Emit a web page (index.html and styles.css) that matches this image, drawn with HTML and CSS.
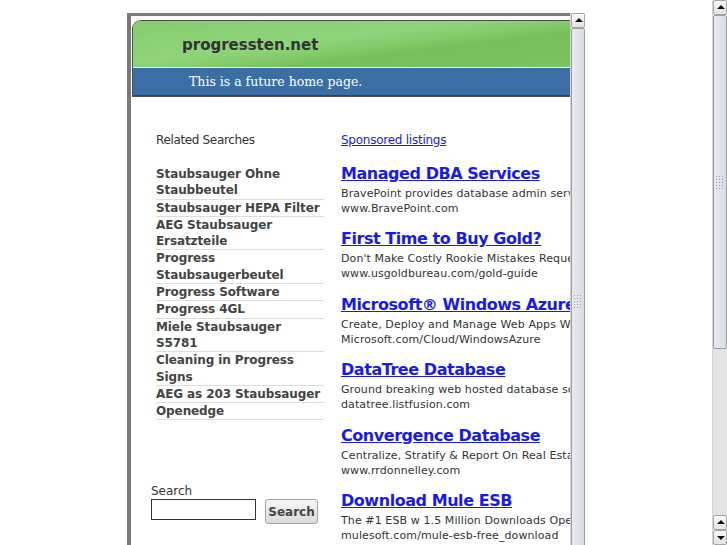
FILE: index.html
```html
<!DOCTYPE html>
<html lang="en">
<head>
    <meta charset="UTF-8">
    <title>progressten.net</title>
    <link rel="stylesheet" href="styles.css">
</head>
<body>
    <div class="viewport">
        <div class="frame">
            <div class="frame-doc">
                <header class="site-header">
                    <div class="site-title">progressten.net</div>
                    <div class="site-tagline">This is a future home page.</div>
                </header>

                <div class="content">
                    <aside class="related">
                        <h2>Related Searches</h2>
                        <ul class="related-list">
                            <li>Staubsauger Ohne Staubbeutel</li>
                            <li>Staubsauger HEPA Filter</li>
                            <li>AEG Staubsauger Ersatzteile</li>
                            <li>Progress Staubsaugerbeutel</li>
                            <li>Progress Software</li>
                            <li>Progress 4GL</li>
                            <li>Miele Staubsauger S5781</li>
                            <li>Cleaning in Progress Signs</li>
                            <li>AEG as 203 Staubsauger</li>
                            <li>Openedge</li>
                        </ul>

                        <form class="search-form">
                            <label for="q">Search</label>
                            <div class="search-row">
                                <input type="text" id="q">
                                <button type="button">Search</button>
                            </div>
                        </form>
                    </aside>

                    <main class="listings">
                        <a class="sponsored" href="#">Sponsored listings</a>

                        <div class="ad">
                            <a class="ad-title" href="#">Managed DBA Services</a>
                            <p>BravePoint provides database admin services for your business</p>
                            <p>www.BravePoint.com</p>
                        </div>
                        <div class="ad">
                            <a class="ad-title" href="#">First Time to Buy Gold?</a>
                            <p>Don't Make Costly Rookie Mistakes Request Free Guide</p>
                            <p>www.usgoldbureau.com/gold-guide</p>
                        </div>
                        <div class="ad">
                            <a class="ad-title" href="#">Microsoft® Windows Azure</a>
                            <p>Create, Deploy and Manage Web Apps With Ease</p>
                            <p>Microsoft.com/Cloud/WindowsAzure</p>
                        </div>
                        <div class="ad">
                            <a class="ad-title" href="#">DataTree Database</a>
                            <p>Ground breaking web hosted database solutions</p>
                            <p>datatree.listfusion.com</p>
                        </div>
                        <div class="ad">
                            <a class="ad-title" href="#">Convergence Database</a>
                            <p>Centralize, Stratify &amp; Report On Real Estate Data</p>
                            <p>www.rrdonnelley.com</p>
                        </div>
                        <div class="ad">
                            <a class="ad-title" href="#">Download Mule ESB</a>
                            <p>The #1 ESB w 1.5 Million Downloads Open Source</p>
                            <p>mulesoft.com/mule-esb-free_download</p>
                        </div>
                    </main>
                </div>
            </div>

            <div class="scrollbar">
                <div class="sb-btn up"></div>
                <div class="sb-thumb long"><span class="grip"></span></div>
            </div>
        </div>
    </div>

    <div class="scrollbar page">
        <div class="sb-btn up"></div>
        <div class="sb-thumb"><span class="grip"></span></div>
        <div class="sb-track"></div>
        <div class="sb-btn up"></div>
        <div class="sb-btn down"></div>
    </div>
</body>
</html>
```

FILE: styles.css
```css
* {
    margin: 0;
    padding: 0;
    box-sizing: border-box;
}

html, body {
    height: 545px;
    overflow: hidden;
}

body {
    display: flex;
    background-color: white;
    color: #333;
    font-family: 'DejaVu Sans', Verdana, sans-serif;
    font-size: 11px;
}

.viewport {
    flex: 1;
    padding-top: 13px;
}

.frame {
    width: 458px;
    height: 560px;
    margin: 0 auto;
    display: flex;
}

.frame-doc {
    flex: 1;
    overflow: hidden;
    border-top: 3px solid #7a7a7a;
    border-left: 4px solid #7a7a7a;
    padding: 4px 0 0 1px;
}

/* header */
.site-header {
    width: 480px;
    border: 1px solid #4f4f4f;
    border-right: none;
    border-radius: 9px 0 0 0;
    overflow: hidden;
}

.site-title {
    height: 47px;
    padding: 15px 0 0 49px;
    background: linear-gradient(173deg, #86cc6e 0%, #8fd47b 40%, #84cb6b 52%, #76bf5a 62%, #7bc360 100%);
    border-bottom: 1px solid #eef5ea;
    color: #333;
    font-weight: bold;
    font-size: 15px;
    line-height: 18px;
}

.site-tagline {
    height: 28px;
    padding: 5px 0 0 56px;
    background-color: #3a6ea5;
    border-bottom: 1px solid #22466e;
    color: white;
    font-family: 'DejaVu Serif', serif;
    font-size: 12.5px;
    line-height: 17px;
}

/* columns */
.content {
    display: flex;
    padding: 35px 0 0 19px;
}

.related {
    width: 190px;
    flex: none;
}

.related h2 {
    font-size: 12px;
    font-weight: normal;
    line-height: 16px;
    letter-spacing: -0.35px;
    margin: 0 0 18px 5px;
}

.related-list {
    list-style: none;
    width: 168px;
    margin-left: 5px;
}

.related-list li {
    color: #444;
    font-size: 12px;
    font-weight: bold;
    line-height: 16.3px;
    letter-spacing: -0.1px;
    border-bottom: 1px solid #dcdcdc;
}

.search-form {
    margin-top: 64px;
}

.search-form label {
    display: block;
    font-size: 12px;
    line-height: 14px;
    margin-bottom: 1px;
}

.search-row {
    display: flex;
    gap: 9px;
    align-items: flex-start;
}

.search-row input {
    width: 105px;
    height: 21px;
    border: 1px solid #333;
}

.search-row button {
    width: 53px;
    height: 25px;
    border: 1px solid #a4a4a4;
    border-radius: 3px;
    background: linear-gradient(#f6f6f6, #dadada);
    color: #444;
    font-family: 'DejaVu Sans', sans-serif;
    font-size: 12px;
    font-weight: bold;
}

.listings {
    flex: none;
    white-space: nowrap;
}

.sponsored {
    display: block;
    color: #1a1ae6;
    font-size: 12px;
    line-height: 16px;
    letter-spacing: -0.25px;
    margin-bottom: 16px;
}

.ad {
    margin-bottom: 13.4px;
}

.ad-title {
    display: block;
    color: #1a1ae6;
    font-size: 16px;
    font-weight: bold;
    line-height: 20px;
    letter-spacing: -0.45px;
    margin-bottom: 2px;
}

.ad p {
    line-height: 15px;
    letter-spacing: 0.1px;
    color: #333;
}

/* scrollbars */
.scrollbar {
    width: 15px;
    flex: none;
    display: flex;
    flex-direction: column;
    background-color: #f2f2f5;
    border-left: 1px solid #d4d4d8;
}

.sb-btn {
    height: 15px;
    flex: none;
    position: relative;
    border: 1px solid #a6a6a6;
    border-radius: 2px;
    background: linear-gradient(#fafafb, #e1e1e6);
}

.sb-btn::after {
    content: '';
    position: absolute;
    left: 3px;
    border-left: 4px solid transparent;
    border-right: 4px solid transparent;
}

.sb-btn.up::after {
    top: 4px;
    border-bottom: 4px solid #111;
}

.sb-btn.down::after {
    top: 5px;
    border-top: 4px solid #111;
}

.sb-thumb {
    height: 334px;
    flex: none;
    display: flex;
    align-items: center;
    justify-content: center;
    border: 1px solid #9c9c9c;
    border-radius: 2px;
    background: linear-gradient(90deg, #e9eaf0, #d8dce4);
}

.sb-thumb.long {
    flex: 1;
    height: auto;
}

.grip {
    width: 10px;
    height: 14px;
    background-image: radial-gradient(#9a9ca8 0.8px, transparent 1px);
    background-size: 3px 3px;
}

.sb-track {
    flex: 1;
    background-color: #f4f4f4;
    background-image: radial-gradient(#e2e2e2 0.7px, transparent 0.8px);
    background-size: 2px 2px;
}
```
